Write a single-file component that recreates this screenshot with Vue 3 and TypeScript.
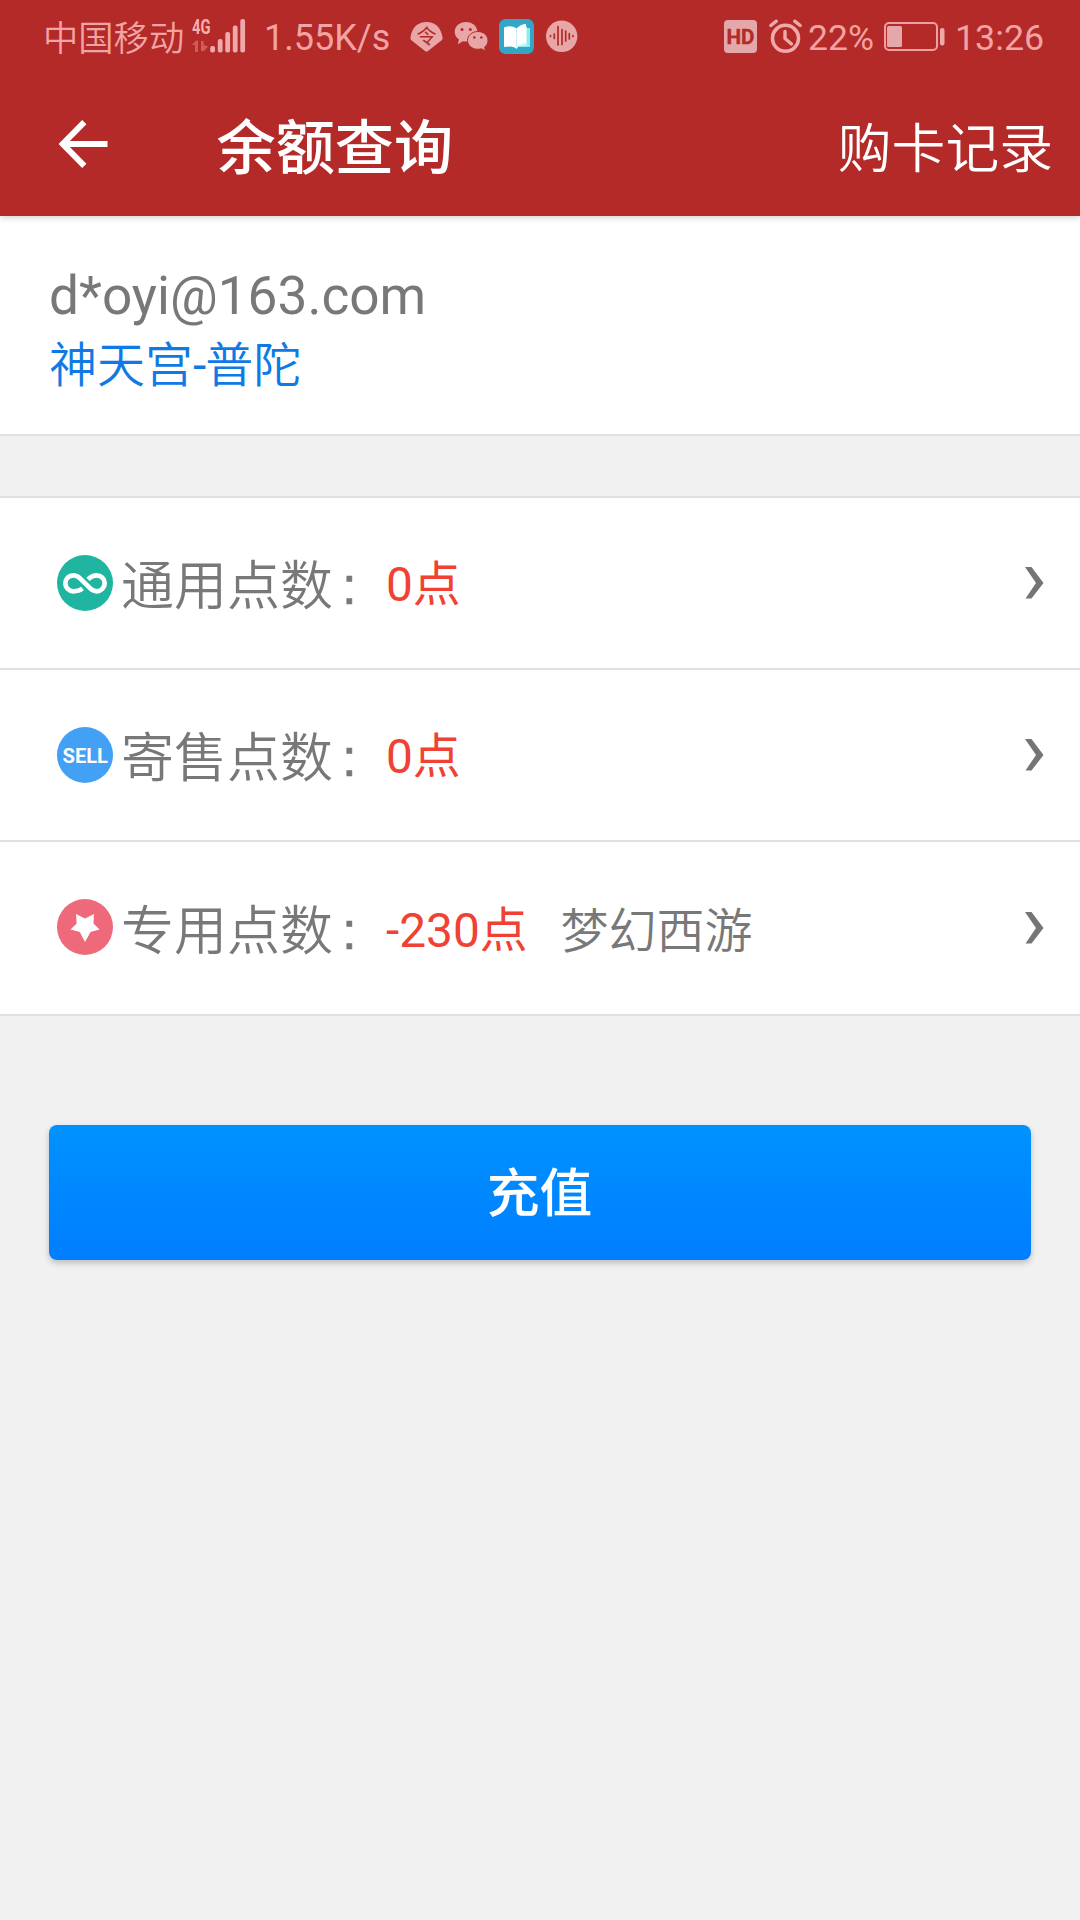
<script setup lang="ts">
interface PointRow {
  kind: 'general' | 'consign' | 'special'
  label: string
  value: string
  note?: string
}

const rows: PointRow[] = [
  { kind: 'general', label: '通用点数', value: '0点' },
  { kind: 'consign', label: '寄售点数', value: '0点' },
  { kind: 'special', label: '专用点数', value: '-230点', note: '梦幻西游' },
]
</script>

<template>
  <div class="screen">
    <header class="header">
      <div class="status">
        <span class="carrier">中国移动</span>
        <svg class="signal" width="60" height="76" viewBox="190 0 60 76">
          <text x="192" y="34" class="net" textLength="18.5" lengthAdjust="spacingAndGlyphs">4G</text>
          <g fill="#cf5b5d">
            <path d="M192 45l4-4.500h2V52h-3v-7zM201 41h2.600v4l4.500 1.500-4 4.500h-3.100z" />
          </g>
          <g fill="#efa9aa">
            <rect x="210.200" y="46" width="4.800" height="6.500" rx="2" />
            <rect x="217.800" y="39" width="4.800" height="13.500" rx="2" />
            <rect x="225.300" y="32" width="4.800" height="20.500" rx="2" />
            <rect x="232.800" y="25.500" width="4.800" height="27" rx="2" />
            <rect x="240.300" y="19" width="4.800" height="33.500" rx="2" />
          </g>
        </svg>
        <span class="speed">1.55K/s</span>
        <svg class="fan" width="38" height="76" viewBox="408 0 38 76">
          <path d="M410.500 37.500C412 27 418 22 426.500 22s14.500 5 16 15.500c.200 1.500-.200 2.300-1.200 3L428 51c-1 .800-2 .800-3 0l-13.300-10.500c-1-.700-1.400-1.500-1.200-3z" fill="#e9a6a7" />
          <text x="416.500" y="44" class="fan-text">令</text>
        </svg>
        <svg class="wechat" width="39" height="76" viewBox="452 0 39 76">
          <path d="M466 22c-6.300 0-11.300 4.300-11.300 9.700 0 3.300 1.700 6 4.300 7.800l-1.200 4.700 5-2.900c1 .200 2 .300 3.200.300 6.400 0 11.400-4.500 11.400-9.900S472.400 22 466 22z" fill="#e9a6a7" />
          <path d="M477.800 31.500c-5.700 0-10.300 4-10.300 8.900s4.600 8.900 10.300 8.900c1.300 0 2.500-.200 3.600-.500l4.300 2.200-1.200-3.800c2.200-1.700 3.500-4 3.500-6.800 0-4.900-4.500-8.900-10.200-8.900z" fill="#e9a6a7" stroke="#b32a2a" stroke-width="1" />
          <g fill="#b32a2a">
            <circle cx="462" cy="29.500" r="1.500" /><circle cx="470.300" cy="29.500" r="1.500" />
            <circle cx="474.300" cy="37.500" r="1.300" /><circle cx="481.300" cy="37.500" r="1.300" />
          </g>
        </svg>
        <svg class="book" width="39" height="76" viewBox="497 0 39 76">
          <rect x="499" y="19" width="35" height="35" rx="6.500" fill="#31a6c6" />
          <path d="M521 28h9v19h-11z" fill="#8fe9f2" />
          <path d="M516 29l8-2.500h3V46h-10z" fill="#c5f7fa" />
          <path d="M504 27.500c5-1.800 9-1.500 12.500 1 2-2.500 5-3.800 9.500-4.800v19c-4 1-7 2.200-9.500 6.300-1.500-2.500-6-3.200-12.500-2z" fill="#fff" />
          <path d="M516.500 28.500V47" stroke="#c8eef2" stroke-width="1" />
        </svg>
        <svg class="wave" width="36" height="76" viewBox="544 0 36 76">
          <circle cx="561.700" cy="36.300" r="15.700" fill="#e9a6a7" />
          <path d="M550.500 35.500v1M554.300 34v4.500M558 26.500v18.500M562 29.500v15M565.700 31v10M569.300 33.500v5.500M573 35.500v1" stroke="#b32a2a" stroke-width="1.700" stroke-linecap="round" />
        </svg>
        <svg class="hd" width="37" height="76" viewBox="722 0 37 76">
          <rect x="724" y="20" width="33" height="33" rx="4" fill="#e5a8aa" />
          <text x="726.500" y="44" class="hd-text" textLength="28" lengthAdjust="spacingAndGlyphs">HD</text>
        </svg>
        <svg class="alarm" width="38" height="76" viewBox="767 0 38 76" fill="none" stroke="#efa9aa">
          <circle cx="785.500" cy="38.300" r="13" stroke-width="3.600" />
          <path d="M785 31.500v7l6.500 5.500" stroke-width="3.400" stroke-linecap="round" stroke-linejoin="round" />
          <path d="M770.800 25.500l5.500-4.300M800.200 25.500l-5.500-4.300" stroke-width="3.400" stroke-linecap="round" />
        </svg>
        <span class="percent">22%</span>
        <svg class="battery" width="64" height="76" viewBox="882 0 64 76">
          <rect x="885" y="23" width="52" height="27" rx="4" fill="none" stroke="#efa0a0" stroke-width="2" />
          <rect x="887" y="26" width="15" height="21" rx="1.500" fill="#e5a8aa" />
          <rect x="940" y="28" width="4.500" height="17.500" rx="2" fill="#efa9aa" />
        </svg>
        <span class="time">13:26</span>
      </div>
      <div class="nav">
        <svg class="back" width="50" height="52" viewBox="0 0 50 52">
          <path d="M25.300 4.200L3.800 26l21.500 21.800M4.500 26H48.500" fill="none" stroke="#fff" stroke-width="6" />
        </svg>
        <h1 class="title">余额查询</h1>
        <span class="records">购卡记录</span>
      </div>
    </header>

    <section class="profile">
      <div class="email">d*oyi@163.com</div>
      <div class="server">神天宫<span class="dash">-</span>普陀</div>
    </section>

    <section class="list">
      <div v-for="row in rows" :key="row.kind" class="row" :class="row.kind">
        <svg class="badge" width="56" height="56" viewBox="0 0 56 56">
          <template v-if="row.kind === 'general'">
            <circle cx="28" cy="28" r="28" fill="#1fb5a0" />
            <path d="M25.500 33.500Q22 36.300 16.300 36.300A8 8 0 1 1 16.300 20.300Q20 20.300 23 23.300L33 33.200Q36 36.300 39.700 36.300A8 8 0 1 0 39.700 20.300Q35 20.300 31 24.300" fill="none" stroke="#fff" stroke-width="4.700" />
          </template>
          <template v-else-if="row.kind === 'consign'">
            <circle cx="28" cy="28" r="28" fill="#42a0f5" />
            <text x="5.5" y="36" class="sell" textLength="45.5" lengthAdjust="spacingAndGlyphs">SELL</text>
          </template>
          <template v-else>
            <circle cx="28" cy="28" r="28" fill="#ee6a7b" />
            <path d="M19 15l9 4.500 9-4.500-.500 9.500 6 6-9 2.500L28 43l-5.200-10-9.300-2.500 6.200-6z" fill="#fff" />
          </template>
        </svg>
        <span class="label">{{ row.label }}</span>
        <span class="colon">:</span>
        <span class="value">{{ row.value }}</span>
        <span v-if="row.note" class="note">{{ row.note }}</span>
        <svg class="chevron" width="20" height="32" viewBox="0 0 20 32">
          <path d="M0 0h6.500L18.500 16 6.500 31.500H.500L11 16z" fill="#757575" />
        </svg>
      </div>
    </section>

    <button class="recharge" type="button">充值</button>
  </div>
</template>

<style>
body {
  background: #f1f1f1;
}
</style>

<style scoped>
.screen {
  width: 1080px;
  height: 1920px;
  overflow: hidden;
  background: #f1f1f1;
  font-family: Roboto, 'Noto Sans CJK SC', sans-serif;
  color: #787878;
}

.header {
  position: relative;
  z-index: 1;
  height: 216px;
  background: #b32a29;
  box-shadow: 0 2px 6px rgba(0, 0, 0, 0.17);
}

.status {
  display: flex;
  height: 76px;
  line-height: 76px;
  font-size: 36px;
  color: #f2a3a3;
  white-space: nowrap;
}

.status svg,
.status span {
  flex: none;
}

.carrier {
  width: 147px;
  margin-left: 43px;
  padding-top: 1px;
  font-size: 35.300px;
  font-weight: 350;
}

.net {
  font: 700 21px Roboto, sans-serif;
  fill: #f2b0b0;
}

.speed {
  width: 131px;
  margin-left: 14px;
}

.fan { margin-left: 13px; }

.fan-text {
  font: 400 20px 'Noto Sans CJK SC', sans-serif;
  fill: #b32a29;
}

.wechat { margin-left: 6px; }
.book { margin-left: 6px; }
.wave { margin-left: 8px; }
.hd { margin-left: 142px; }

.hd-text {
  font: 700 21px Roboto, sans-serif;
  fill: #b32a29;
  stroke: #b32a29;
  stroke-width: 0.4px;
}

.alarm { margin-left: 8px; }

.percent {
  width: 74px;
  margin-left: 3px;
  font-size: 35.500px;
}

.time {
  margin-left: 9px;
  font-size: 35.800px;
}

.nav {
  display: flex;
  align-items: center;
  box-sizing: border-box;
  height: 140px;
  padding: 6px 27px 0 56px;
  color: #fff;
}

.back {
  margin: 0 0 11px 3px;
}

.title {
  margin: 0 0 0 107.500px;
  font-size: 59.200px;
  line-height: 80px;
  font-weight: 500;
}

.records {
  margin-left: auto;
  padding-top: 1px;
  font-size: 53.800px;
  line-height: 80px;
  font-weight: 350;
}

.profile {
  box-sizing: border-box;
  height: 220px;
  padding: 50px 49px 0;
  background: #fff;
  border-bottom: 2px solid #e0e0e0;
}

.email {
  font-size: 53.200px;
  line-height: 60px;
}

.server {
  margin-top: 10px;
  font-size: 48px;
  line-height: 60px;
  font-weight: 350;
  color: #0f7ae5;
}

.dash {
  font-weight: 400;
  margin-right: -1px;
}

.list {
  margin-top: 60px;
  border-top: 2px solid #e0e0e0;
}

.row {
  display: flex;
  align-items: center;
  height: 170px;
  padding: 0 35px 0 57px;
  background: #fff;
  border-bottom: 2px solid #e0e0e0;
  line-height: 80px;
  white-space: nowrap;
}

.special {
  height: 172px;
}

.special .badge {
  margin-bottom: 2px;
}

.label {
  width: 221px;
  margin-left: 8px;
  padding-top: 8px;
  font-size: 53px;
  font-weight: 350;
}

.colon {
  width: 44px;
  padding-top: 5px;
  font-family: 'Liberation Sans', sans-serif;
  font-size: 53px;
  -webkit-text-stroke: 0.600px #787878;
}

.value {
  padding-top: 4px;
  font-size: 47.800px;
  color: #f04134;
}

.special .value {
  padding-top: 5px;
}

.note {
  margin-left: 33px;
  padding-top: 8px;
  font-size: 48px;
  font-weight: 350;
}

.chevron {
  margin-left: auto;
}

.sell {
  font: 700 20px Roboto, sans-serif;
  fill: #fff;
}

.recharge {
  display: block;
  width: 982px;
  height: 135px;
  margin: 109px 0 0 49px;
  padding: 2px 1px 0 0;
  border: 0;
  border-radius: 8px;
  background: linear-gradient(#0092ff, #007eff);
  box-shadow: 0 3px 6px rgba(0, 0, 0, 0.22);
  font: 500 52.800px/80px Roboto, 'Noto Sans CJK SC', sans-serif;
  color: #fff;
}
</style>
